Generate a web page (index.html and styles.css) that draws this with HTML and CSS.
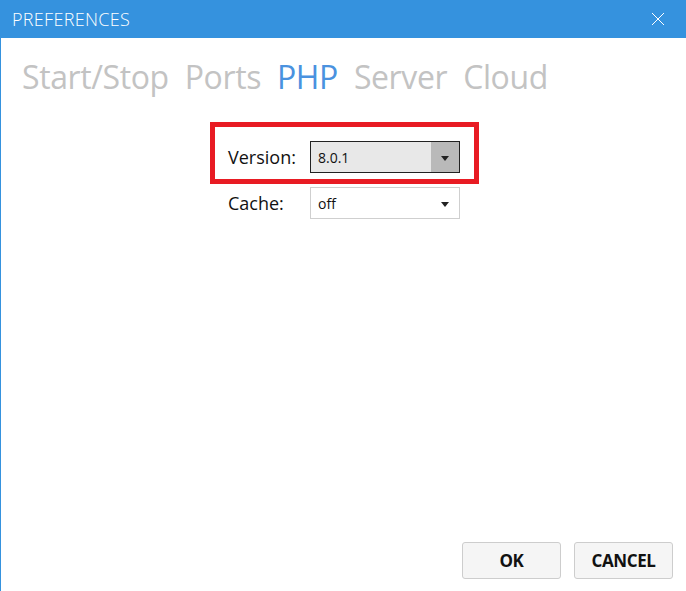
FILE: index.html
```html
<!DOCTYPE html>
<html>
<head>
<meta charset="utf-8">
<link rel="stylesheet" href="styles.css">
</head>
<body>
<div class="window">
  <header class="titlebar">
    <span class="title">PREFERENCES</span>
    <svg class="close" width="14" height="14" viewBox="0 0 14 14"><path d="M1 1L13 13M13 1L1 13" stroke="#fff" stroke-width="1" fill="none"/></svg>
  </header>
  <nav class="tabs">
    <span class="tab">Start/Stop</span>
    <span class="tab">Ports</span>
    <span class="tab active">PHP</span>
    <span class="tab">Server</span>
    <span class="tab">Cloud</span>
  </nav>
  <section class="form">
    <div class="row highlight">
      <span class="label">Version:</span>
      <div class="select dark"><span class="value">8.0.1</span><span class="arrow"><i class="tri"></i></span></div>
    </div>
    <div class="row plain">
      <span class="label">Cache:</span>
      <div class="select light"><span class="value">off</span><span class="arrow"><i class="tri"></i></span></div>
    </div>
  </section>
  <footer class="buttons">
    <button class="btn">OK</button>
    <button class="btn">CANCEL</button>
  </footer>
</div>
</body>
</html>
```

FILE: styles.css
```css
html, body {
  margin: 0;
  padding: 0;
  background: #fff;
}
.window {
  height: 591px;
  display: flex;
  flex-direction: column;
  border-left: 1px solid #3592de;
  box-sizing: border-box;
  font-family: "Open Sans", "Noto Sans", sans-serif;
}
.titlebar {
  height: 38px;
  background: #3592de;
  display: flex;
  align-items: center;
  justify-content: space-between;
  padding: 0 21px 0 11px;
  flex: none;
}
.title {
  color: #fff;
  font-size: 18px;
  font-weight: 300;
  letter-spacing: 0.3px;
}
.close { display: block; }
.tabs {
  display: flex;
  gap: 16px;
  padding: 14px 0 0 21px;
  height: 50px;
  align-items: center;
  flex: none;
}
.tab {
  font-size: 32px;
  color: #c3c3c3;
  letter-spacing: -0.4px;
  line-height: 1;
}
.tab.active { color: #4a92df; }
.form {
  margin-left: 209px;
  margin-top: 20px;
  display: flex;
  flex-direction: column;
  align-items: flex-start;
}
.row {
  display: flex;
  align-items: center;
}
.highlight {
  border: 5px solid #e81b23;
  padding: 14px 14px 6px 13px;
  width: 269px;
  box-sizing: border-box;
}
.plain {
  padding-left: 18px;
  margin-top: 3px;
}
.label {
  width: 82px;
  font-size: 18px;
  color: #111;
}
.select {
  width: 150px;
  height: 32px;
  box-sizing: border-box;
  display: flex;
  align-items: stretch;
  font-size: 14px;
  color: #111;
}
.select .value {
  flex: 1;
  display: flex;
  align-items: center;
  padding-left: 7px;
}
.select .arrow {
  width: 28px;
  display: flex;
  align-items: center;
  justify-content: center;
}
.tri {
  width: 0;
  height: 0;
  border-left: 4px solid transparent;
  border-right: 4px solid transparent;
  border-top: 5px solid #222;
  margin-top: 2px;
}
.dark {
  border: 1px solid #222;
  background: #e8e8e8;
}
.dark .arrow { background: #b9b9b9; }
.light {
  border: 1px solid #cfcfcf;
  background: #fff;
}
.buttons {
  margin-top: auto;
  display: flex;
  justify-content: flex-end;
  gap: 13px;
  padding: 0 13px 12px 0;
}
.btn {
  width: 99px;
  height: 37px;
  border: 1px solid #cdcdcd;
  border-radius: 3px;
  background: #f5f5f5;
  font-family: "Open Sans", "Noto Sans", sans-serif;
  font-weight: 700;
  font-size: 17px;
  color: #111;
  letter-spacing: -0.4px;
  padding: 0;
}
```
